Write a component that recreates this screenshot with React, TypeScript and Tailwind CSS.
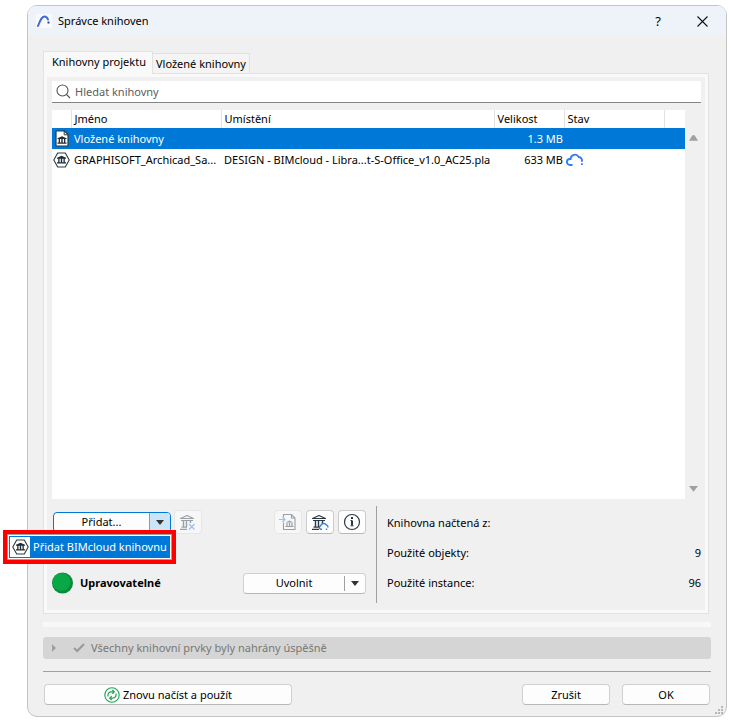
import type { ReactNode } from "react";
import clsx from "clsx";

const libraries = [
  { name: "Vložené knihovny", location: "", size: "1.3 MB", kind: "embedded", cloud: false, selected: true },
  {
    name: "GRAPHISOFT_Archicad_Sa...",
    location: "DESIGN - BIMcloud - Libra...t-S-Office_v1.0_AC25.pla",
    size: "633 MB",
    kind: "bimcloud",
    cloud: true,
    selected: false,
  },
];

const stats = [
  { label: "Knihovna načtená z:", value: "" },
  { label: "Použité objekty:", value: "9" },
  { label: "Použité instance:", value: "96" },
];

function EmbeddedIcon() {
  return (
    <svg width="14" height="17" viewBox="0 0 14 17" className="block">
      <path d="M1 1h8.500L13 4.500V16H1z" fill="#fff" stroke="#2b3a42" strokeWidth="1.200" strokeLinejoin="round" />
      <path d="M9.200 1v3.800H13z" fill="#fff" stroke="#2b3a42" />
      <path d="M2.500 8.200 7 6.200l4.500 2v.9h-9zM3.700 9H5v3.500H3.700zM6.300 9h1.400v3.500H6.300zM9 9h1.300v3.500H9zM2.500 12.500h9v1.300h-9z" fill="#1f2d35" />
    </svg>
  );
}

function BimcloudIcon() {
  return (
    <svg width="17" height="16" viewBox="0 0 17 16" className="block">
      <path d="M4.700 1h7.600l3.900 7-3.900 7H4.700L.8 8z" fill="#fff" stroke="#2b3a42" strokeWidth="1.100" strokeLinejoin="round" />
      <path d="M4 5.800 8.500 3.800l4.500 2v1H4zM5.200 6.500h1.300v4H5.200zM7.800 6.500h1.400v4H7.800zM10.500 6.500h1.300v4h-1.300zM4 10.300h9v1.300H4z" fill="#1f2d35" />
    </svg>
  );
}

// classical building: gable, entablature, columns; the right side stays open for a badge
function Bank() {
  return (
    <g fill="none" stroke="#2b3a42">
      <path d="M1.500 4.500 8 1.500l6.500 3z" strokeWidth="1.100" strokeLinejoin="round" />
      <path d="M2 6.500h12" />
      <path d="M4.500 6.500V13M7.500 6.500V13M11.500 6.500V9" strokeWidth="1.400" />
      <path d="M2.500 13.200h5.500M1 15.300h7" strokeWidth="1.200" />
    </g>
  );
}

function RemoveIcon() {
  return (
    <svg width="18" height="17" viewBox="0 0 18 17" className="opacity-45">
      <Bank />
      <path d="m10 10 5.500 5.500m0-5.500L10 15.500" stroke="#2f7cf6" strokeWidth="1.300" />
    </svg>
  );
}

function RefreshLibraryIcon() {
  return (
    <svg width="18" height="17" viewBox="0 0 18 17">
      <Bank />
      <path d="M11 15.200H9.800a1.800 1.800 0 0 1-.1-3.500 3.100 3.100 0 0 1 5.600-.8 1.900 1.900 0 0 1 1.400 2.600" fill="none" stroke="#2f7cf6" strokeWidth="1.400" />
      <path d="M15.500 14.500v1.500" stroke="#2f7cf6" strokeWidth="1.400" />
    </svg>
  );
}

function EmbedIcon() {
  return (
    <svg width="18" height="18" viewBox="0 0 18 18" fill="none" className="opacity-45">
      <path d="M4.500 4V1.500h8l3.500 3.500v11.500H4.500V9.500M12.500 1.500V5H16" stroke="#2b3a42" strokeWidth="1.100" />
      <path d="M6.500 9.500 10.500 7.500l4 2z" fill="#2b3a42" />
      <path d="M8 10v3M10.500 10v3M13 10v3" stroke="#2b3a42" strokeWidth="1.200" />
      <path d="M6.500 13.500h8" stroke="#2b3a42" />
      <path d="M0 6.500h6M3.500 4 6 6.500 3.500 9" stroke="#2f7cf6" strokeWidth="1.200" />
    </svg>
  );
}

function InfoIcon() {
  return (
    <svg width="18" height="18" viewBox="0 0 18 18" fill="none" stroke="#2b3a42">
      <circle cx="9" cy="9" r="7.500" strokeWidth="1.200" />
      <path d="M9 7.500v5M9 4v2" strokeWidth="2" />
      <path d="M7.500 7.500H9M7.500 12.800h3" />
    </svg>
  );
}

function CloudIcon() {
  return (
    <svg width="18" height="15" viewBox="0 0 18 15" fill="none" stroke="#2f7cf6" strokeWidth="1.800" className="block">
      <path d="M6.500 13H4a3 3 0 0 1-.2-6h.8A4.300 4.300 0 0 1 12.700 5a3.300 3.300 0 0 1 3.200 3.500" />
      <path d="M15.900 7.500V9.800M15.900 11.200v1.800" />
    </svg>
  );
}

function ReloadIcon() {
  return (
    <svg width="16" height="16" viewBox="0 0 16 16" fill="none" stroke="#1fa352">
      <circle cx="8" cy="8" r="7.200" strokeWidth="1.100" />
      <path
        d="M4 9.500C3.500 6.500 5 4.800 7.500 4.800H10M8.300 2.800l2 2-2 2M12 6.500c.5 3-1 4.700-3.500 4.700H6M7.700 9.200l-2 2 2 2"
        strokeWidth="1.200"
      />
    </svg>
  );
}

function Triangle({ dir, className }: { dir: "up" | "down" | "right"; className: string }) {
  const points = { up: "0,6 3,1 5,1 8,6", down: "0,0 8,0 4,5", right: "1,0 5,4 1,8" }[dir];
  return (
    <svg width="8" height="8" viewBox="0 0 8 8" className={className}>
      <polygon points={points} fill="currentColor" />
    </svg>
  );
}

function ToolButton({ label, disabled, children }: { label: string; disabled?: boolean; children: ReactNode }) {
  return (
    <button
      aria-label={label}
      disabled={disabled}
      className={clsx(
        "flex h-6 w-7 items-center justify-center rounded border",
        disabled ? "border-[#e6e6e6] bg-[#f7f7f7]" : "border-[#cccccc] border-b-[#b8b8b8] bg-[#fdfdfd]",
      )}
    >
      {children}
    </button>
  );
}

function PushButton({ className, children }: { className: string; children: ReactNode }) {
  return (
    <button
      className={clsx(
        "flex h-[21px] items-center justify-center gap-[3px] rounded border border-[#d0d0d0] border-b-[#b8b8b8] bg-[#fdfdfd]",
        className,
      )}
    >
      {children}
    </button>
  );
}

function TitleBar() {
  return (
    <header className="flex h-[30px] items-center rounded-t-lg bg-[#eef3f9] pr-[18px] pl-2">
      <svg width="16" height="14" viewBox="0 0 16 14" fill="none" className="mr-1.5">
        <rect width="16" height="14" rx="2" fill="#f8fafd" />
        <path d="M2 12C4 7 5.500 2.500 8.500 2.500c1.800 0 2.800 1.200 3.500 3" stroke="#4169d0" strokeWidth="2" strokeLinecap="round" />
        <path d="M12.500 7.500v2" stroke="#27439a" strokeWidth="2" />
      </svg>
      <h1>Správce knihoven</h1>
      <button aria-label="Nápověda" className="mr-9 ml-auto text-[13px]">
        ?
      </button>
      <button aria-label="Zavřít">
        <svg width="11" height="11" viewBox="0 0 11 11" stroke="#111" strokeWidth="1.100">
          <path d="m.5.5 10 10M10.500.5l-10 10" />
        </svg>
      </button>
    </header>
  );
}

function LibraryTable() {
  return (
    <div className="mt-[7px] flex">
      <div className="min-h-[389px] flex-1 bg-white">
        <table className="w-full table-fixed text-left">
          <colgroup>
            <col className="w-[19px]" />
            <col className="w-[150px]" />
            <col />
            <col className="w-[70px]" />
            <col className="w-[100px]" />
            <col className="w-[21px]" />
          </colgroup>
          <thead>
            <tr className="h-[18px] *:border-l *:border-[#e2e2e2] *:p-0 *:pl-[3px] *:font-normal">
              <th className="border-l-0!" />
              <th>Jméno</th>
              <th>Umístění</th>
              <th>Velikost</th>
              <th>Stav</th>
              <th />
            </tr>
          </thead>
          <tbody>
            {libraries.map((lib) => (
              <tr key={lib.name} className={clsx("h-[21px] whitespace-nowrap", lib.selected && "bg-[#0078d7] text-white")}>
                <td className={lib.kind === "embedded" ? "pl-[3px]" : "pl-[1px]"}>
                  {lib.kind === "embedded" ? <EmbeddedIcon /> : <BimcloudIcon />}
                </td>
                <td className="pl-[3px]">{lib.name}</td>
                <td className="pl-[3px]">{lib.location}</td>
                <td className="pr-px text-right">{lib.size}</td>
                <td className="pl-[2px]">{lib.cloud && <CloudIcon />}</td>
                <td />
              </tr>
            ))}
          </tbody>
        </table>
      </div>
      <div className="flex w-4 flex-col items-center justify-between pt-6 pb-1 pl-px text-[#a0a0a0]">
        <Triangle dir="up" className="size-[9px]" />
        <Triangle dir="down" className="size-[9px]" />
      </div>
    </div>
  );
}

function AddButton() {
  return (
    <div className="relative ml-px">
      <div className="flex h-[21px] w-[118px] overflow-hidden rounded border border-[#0078d7] bg-[#fdfdfd]">
        <button className="flex-1">Přidat...</button>
        <button
          aria-label="Další možnosti"
          className="flex w-[21px] items-center justify-center border-l border-[#8a9cab] bg-[#cce4f7] text-[#333]"
        >
          <Triangle dir="down" className="mt-[3px]" />
        </button>
      </div>
      <div className="absolute top-[18px] -left-[50px] z-10 border-4 border-[#ff0000]">
        <div className="border border-[#a0a0a0] bg-white p-px">
          <button className="flex h-[22px] items-center bg-[#0078d7] p-px pr-[3px] whitespace-nowrap text-white">
            <span className="mr-[3px] flex h-full w-5 items-center justify-center bg-white">
              <BimcloudIcon />
            </span>
            Přidat BIMcloud knihovnu
          </button>
        </div>
      </div>
    </div>
  );
}

function Controls() {
  return (
    <div className="mt-[7px] flex h-[97px]">
      <div className="flex w-[314px] flex-col justify-between pt-1 pb-[9px]">
        <div className="flex items-center">
          <AddButton />
          <div className="ml-[3px] flex-1">
            <ToolButton label="Odebrat" disabled>
              <RemoveIcon />
            </ToolButton>
          </div>
          <div className="flex gap-1">
            <ToolButton label="Vložit knihovnu" disabled>
              <EmbedIcon />
            </ToolButton>
            <ToolButton label="Aktualizovat knihovnu">
              <RefreshLibraryIcon />
            </ToolButton>
            <ToolButton label="Informace">
              <InfoIcon />
            </ToolButton>
          </div>
        </div>
        <div className="flex items-center">
          <svg width="22" height="22" viewBox="0 0 22 22" className="mr-[6px]">
            <circle cx="10.500" cy="11" r="10.500" fill="#0b8a3e" />
            <circle cx="9.500" cy="10" r="9" fill="#08a845" />
          </svg>
          <span className="font-bold">Upravovatelné</span>
          <div className="ml-auto flex h-[21px] w-[123px] items-center rounded border border-[#d0d0d0] border-b-[#b8b8b8] bg-[#fdfdfd]">
            <button className="flex-1">Uvolnit</button>
            <button
              aria-label="Možnosti uvolnění"
              className="flex h-[15px] w-[21px] items-center justify-center border-l border-[#a0a0a0] text-[#333]"
            >
              <Triangle dir="down" className="mt-[3px]" />
            </button>
          </div>
        </div>
      </div>
      <dl className="ml-[10px] flex-1 border-l border-[#a0a0a0] pt-[2px] pl-[10px]">
        {stats.map((s) => (
          <div key={s.label} className="flex h-[30px] items-center justify-between">
            <dt>{s.label}</dt>
            <dd>{s.value}</dd>
          </div>
        ))}
      </dl>
    </div>
  );
}

export default function App() {
  return (
    <div className="min-h-[723px] bg-white pt-[5px] pr-1 pl-[27px] font-['Noto_Sans',sans-serif] text-[11px] leading-4 text-black">
      <main className="relative rounded-[10px] border border-[#c4c4c4] bg-[#f0f0f0]">
        <TitleBar />
        <div className="px-[15px] pt-[15px] pb-[11px]">
          <div role="tablist" className="flex items-end">
            <button
              role="tab"
              aria-selected="true"
              className="-mb-px h-[23px] border border-b-0 border-[#e2e2e2] bg-[#f9f9f9] pr-1.5 pb-[2px] pl-2"
            >
              Knihovny projektu
            </button>
            <button role="tab" aria-selected="false" className="h-5 border border-b-0 border-l-0 border-[#e2e2e2] bg-[#f4f4f4] px-[3px]">
              Vložené knihovny
            </button>
          </div>
          <div className="mr-[2px] border border-[#e2e2e2] bg-[#f9f9f9] p-[3px]">
            <div className="bg-[#f0f0f0] pt-1 pr-1 pb-[7px] pl-[5px]">
              <label className="flex h-[22px] items-center border-b border-[#858585] bg-white pl-1">
                <svg width="15" height="15" viewBox="0 0 15 15" fill="none" stroke="#555" strokeWidth="1.100">
                  <circle cx="6.500" cy="6.500" r="5.500" />
                  <path d="m10.500 10.500 3.500 3.500" />
                </svg>
                <input
                  type="text"
                  aria-label="Hledat knihovny"
                  placeholder="Hledat knihovny"
                  className="ml-1 flex-1 outline-none placeholder:text-[#5c5c5c]"
                />
              </label>
              <LibraryTable />
              <Controls />
            </div>
          </div>
          <div className="mt-2 h-[5px] bg-[#f8f8f8]" />
          <div className="mt-[10px] flex h-[22px] items-center rounded-[3px] bg-[#d5d5d5] pl-2 text-[#777]">
            <Triangle dir="right" className="text-[#a0a0a0]" />
            <svg width="12" height="10" viewBox="0 0 12 10" fill="none" stroke="#999" strokeWidth="2" className="mr-[6px] ml-[14px]">
              <path d="m1 5 3.200 3L11 1" />
            </svg>
            Všechny knihovní prvky byly nahrány úspěšně
          </div>
          <footer className="mt-3 flex gap-3 border-t border-[#a0a0a0] px-px pt-3">
            <PushButton className="w-[248px]">
              <ReloadIcon />
              Znovu načíst a použít
            </PushButton>
            <PushButton className="ml-auto w-[88px]">Zrušit</PushButton>
            <PushButton className="w-[88px]">OK</PushButton>
          </footer>
        </div>
        {/* resize grip */}
        <svg width="8" height="8" viewBox="0 0 8 8" fill="#b8b8b8" className="absolute right-[3px] bottom-[2px]">
          <path d="M6 0h2v2H6zM3 3h2v2H3zM6 3h2v2H6zM0 6h2v2H0zM3 6h2v2H3zM6 6h2v2H6z" />
        </svg>
      </main>
    </div>
  );
}
